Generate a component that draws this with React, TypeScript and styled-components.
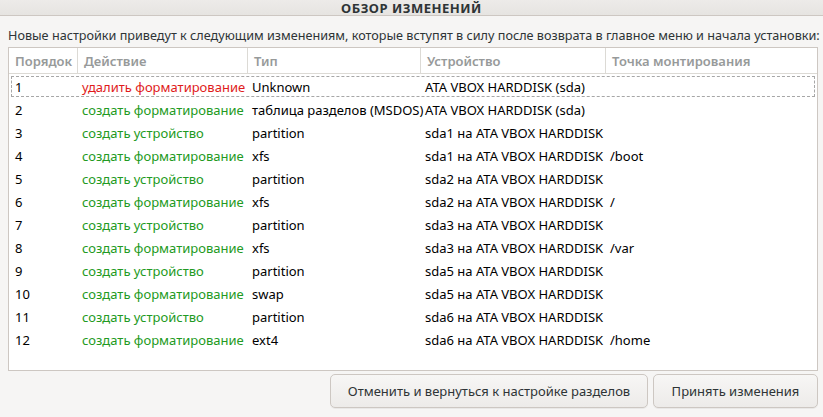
import React from "react";
import styled, { createGlobalStyle } from "styled-components";

const Global = createGlobalStyle`
  html, body { margin: 0; padding: 0; }
  body {
    background: #f6f5f4;
    font-family: "Noto Sans", "Open Sans", sans-serif;
    font-size: 13px;
    color: #2e3436;
    width: 823px;
    height: 417px;
    overflow: hidden;
  }
`;

const Window = styled.div`
  width: 823px;
  height: 417px;
  display: flex;
  flex-direction: column;
  background: #f6f5f4;
`;

const TitleBar = styled.div`
  height: 15px;
  border-bottom: 1px solid #cdc7c2;
  background: linear-gradient(#edebe9, #e6e4e1);
  display: flex;
  align-items: center;
  justify-content: center;
  font-weight: 700;
  font-size: 13px;
  letter-spacing: 0.5px;
  color: #2e3436;
`;

const Content = styled.div`
  flex: 1;
  display: flex;
  flex-direction: column;
  padding: 9px 5px 8px 8px;
`;

const Intro = styled.div`
  height: 22px;
  line-height: 20px;
  white-space: nowrap;
  font-size: 12.65px;
  color: #2e3436;
`;

const TableBox = styled.div`
  height: 324px;
  border: 1px solid #cdc7c2;
  background: #ffffff;
  display: flex;
  flex-direction: column;
  box-sizing: border-box;
`;

const cols = "69px 170px 173px 185px 1fr";

const HeaderRow = styled.div`
  display: grid;
  grid-template-columns: ${cols};
  height: 25px;
  border-bottom: 1px solid #dcdad5;
`;

const HeaderCell = styled.div<{ $last?: boolean }>`
  display: flex;
  align-items: center;
  padding-left: 6px;
  color: #979a9a;
  font-weight: 600;
  border-right: ${(p) => (p.$last ? "none" : "1px solid #dcdad5")};
  white-space: nowrap;
`;

const Body = styled.div`
  padding: 2px 2px 0 2px;
  display: flex;
  flex-direction: column;
`;

const Row = styled.div<{ $focus?: boolean }>`
  display: grid;
  grid-template-columns: 67px 170px 173px 185px 1fr;
  height: 21px;
  margin-bottom: 2px;
  border: 1px dashed ${(p) => (p.$focus ? "#a7a7a7" : "transparent")};
  box-sizing: border-box;
  align-items: center;
`;

const Cell = styled.div<{ $color?: string }>`
  padding-left: 3px;
  white-space: nowrap;
  color: ${(p) => p.$color || "#000000"};
`;

const Footer = styled.div`
  display: flex;
  justify-content: flex-end;
  gap: 5px;
  margin-top: 3px;
`;

const Button = styled.button<{ $w: number }>`
  width: ${(p) => p.$w}px;
  height: 34px;
  border: 1px solid #cdc7c2;
  border-radius: 5px;
  background: linear-gradient(#f7f6f5, #edebe9);
  font-family: inherit;
  font-size: 13px;
  color: #2e3436;
  box-shadow: 0 1px 0 rgba(0,0,0,0.05);
  padding: 0;
`;

const RED = "#e01b1b";
const GREEN = "#229a22";

type R = [string, string, string, string, string];
const rows: R[] = [
  ["1", "удалить форматирование", "Unknown", "ATA VBOX HARDDISK (sda)", ""],
  ["2", "создать форматирование", "таблица разделов (MSDOS)", "ATA VBOX HARDDISK (sda)", ""],
  ["3", "создать устройство", "partition", "sda1 на ATA VBOX HARDDISK", ""],
  ["4", "создать форматирование", "xfs", "sda1 на ATA VBOX HARDDISK", "/boot"],
  ["5", "создать устройство", "partition", "sda2 на ATA VBOX HARDDISK", ""],
  ["6", "создать форматирование", "xfs", "sda2 на ATA VBOX HARDDISK", "/"],
  ["7", "создать устройство", "partition", "sda3 на ATA VBOX HARDDISK", ""],
  ["8", "создать форматирование", "xfs", "sda3 на ATA VBOX HARDDISK", "/var"],
  ["9", "создать устройство", "partition", "sda5 на ATA VBOX HARDDISK", ""],
  ["10", "создать форматирование", "swap", "sda5 на ATA VBOX HARDDISK", ""],
  ["11", "создать устройство", "partition", "sda6 на ATA VBOX HARDDISK", ""],
  ["12", "создать форматирование", "ext4", "sda6 на ATA VBOX HARDDISK", "/home"],
];

export default function App() {
  return (
    <Window>
      <Global />
      <TitleBar>ОБЗОР ИЗМЕНЕНИЙ</TitleBar>
      <Content>
        <Intro>
          Новые настройки приведут к следующим изменениям, которые вступят в силу после возврата в главное меню и начала установки:
        </Intro>
        <TableBox>
          <HeaderRow>
            <HeaderCell>Порядок</HeaderCell>
            <HeaderCell>Действие</HeaderCell>
            <HeaderCell>Тип</HeaderCell>
            <HeaderCell>Устройство</HeaderCell>
            <HeaderCell $last>Точка монтирования</HeaderCell>
          </HeaderRow>
          <Body>
            {rows.map((r, i) => (
              <Row key={i} $focus={i === 0}>
                <Cell>{r[0]}</Cell>
                <Cell $color={i === 0 ? RED : GREEN}>{r[1]}</Cell>
                <Cell>{r[2]}</Cell>
                <Cell>{r[3]}</Cell>
                <Cell>{r[4]}</Cell>
              </Row>
            ))}
          </Body>
        </TableBox>
        <Footer>
          <Button $w={318}>Отменить и вернуться к настройке разделов</Button>
          <Button $w={165}>Принять изменения</Button>
        </Footer>
      </Content>
    </Window>
  );
}
